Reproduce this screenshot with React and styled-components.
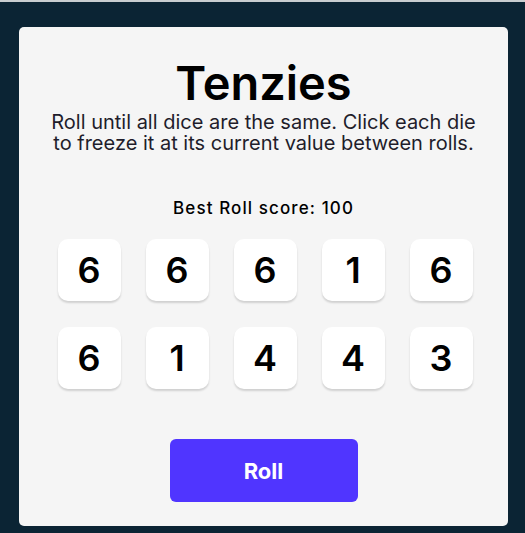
import React, { useState } from "react";
import styled, { createGlobalStyle } from "styled-components";

const Global = createGlobalStyle`
  html, body { margin: 0; padding: 0; }
  body {
    background: #0B2434;
    border-top: 2px solid #c9cdd0;
    font-family: Inter, "Noto Sans", sans-serif;
    min-height: 531px;
  }
  * { box-sizing: border-box; }
`;

const Page = styled.main`
  padding: 25px 17px 0 19px;
`;

const Card = styled.section`
  background: #F5F5F5;
  border-radius: 5px;
  height: 499px;
  padding: 31px 0 0;
  display: flex;
  flex-direction: column;
  align-items: center;
`;

const Title = styled.h1`
  margin: 0;
  font-size: 47px;
  line-height: 50px;
  font-weight: 600;
  letter-spacing: 0px;
  color: #000;
`;

const Instructions = styled.p`
  margin: 4px 0 0;
  font-size: 20px;
  line-height: 21px;
  font-weight: 400;
  text-align: center;
  color: #1f1d2b;
  width: 440px;
`;

const Best = styled.p`
  margin: 44px 0 0;
  font-size: 17px;
  line-height: 20px;
  font-weight: 500;
  letter-spacing: 1.1px;
  color: #000;
`;

const Grid = styled.div`
  margin: 21px 0 0 3px;
  display: grid;
  grid-template-columns: repeat(5, 63px);
  grid-auto-rows: 62px;
  column-gap: 25px;
  row-gap: 26px;
`;

const Die = styled.button`
  border: none;
  border-radius: 10px;
  background: ${(p) => (p.$held ? "#59E391" : "#FFFFFF")};
  box-shadow: 0 2px 2px rgba(0, 0, 0, 0.15);
  font-family: Inter, "Noto Sans", sans-serif;
  font-size: 36px;
  font-weight: 600;
  color: #000;
  display: flex;
  align-items: center;
  justify-content: center;
  padding: 0;
  cursor: pointer;
`;

const RollButton = styled.button`
  margin-top: 50px;
  width: 188px;
  height: 63px;
  border: none;
  border-radius: 6px;
  background: #5035FF;
  color: #fff;
  font-family: Inter, "Noto Sans", sans-serif;
  font-size: 22px;
  font-weight: 700;
  cursor: pointer;
`;

const values = [6, 6, 6, 1, 6, 6, 1, 4, 4, 3];

export default function App() {
  const [dice] = useState(values.map((v, i) => ({ id: i, value: v, held: false })));
  return (
    <>
      <Global />
      <Page>
        <Card>
          <Title>Tenzies</Title>
          <Instructions>
            Roll until all dice are the same. Click each die to freeze it at its current value between rolls.
          </Instructions>
          <Best>Best Roll score: 100</Best>
          <Grid>
            {dice.map((d) => (
              <Die key={d.id} $held={d.held}>{d.value}</Die>
            ))}
          </Grid>
          <RollButton>Roll</RollButton>
        </Card>
      </Page>
    </>
  );
}
